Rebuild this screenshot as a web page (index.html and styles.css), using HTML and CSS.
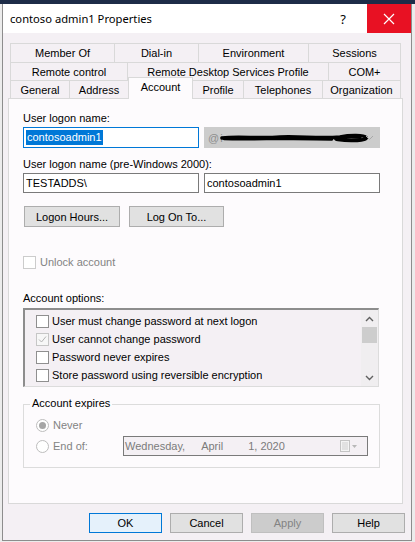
FILE: index.html
```html
<!DOCTYPE html>
<html>
<head>
<meta charset="utf-8">
<link rel="stylesheet" href="styles.css">
</head>
<body>
<div class="desk-strip"></div>
<div class="window">
  <div class="titlebar">
    <span class="title">contoso admin1 Properties</span>
    <span class="tb-help">?</span>
    <span class="tb-close"><svg width="12" height="12" viewBox="0 0 12 12"><path d="M1 1 L11 11 M11 1 L1 11" stroke="#fff" stroke-width="1.2" fill="none"/></svg></span>
  </div>
  <div class="client">
    <div class="tabs">
      <div class="tab-row r1">
        <div class="tab w-member">Member Of</div>
        <div class="tab w-dial">Dial-in</div>
        <div class="tab w-env">Environment</div>
        <div class="tab w-sess">Sessions</div>
      </div>
      <div class="tab-row r2">
        <div class="tab w-rc">Remote control</div>
        <div class="tab w-rds">Remote Desktop Services Profile</div>
        <div class="tab w-com">COM+</div>
      </div>
      <div class="tab-row r3">
        <div class="tab w-gen">General</div>
        <div class="tab w-addr">Address</div>
        <div class="tab sel w-acc">Account</div>
        <div class="tab w-prof">Profile</div>
        <div class="tab w-tel">Telephones</div>
        <div class="tab w-org">Organization</div>
      </div>
    </div>
    <div class="panel">
      <div class="lbl lbl1">User logon name:</div>
      <div class="frow frow1">
        <div class="field focus"><span class="hl">contosoadmin1</span></div>
        <div class="combo">
          <span class="at">@</span><span class="ati">i</span>
          <svg class="scribble" width="150" height="12" viewBox="0 0 150 12"><path d="M2 6 C20 4 40 7 60 5 C80 4 100 7 120 5 C130 3 144 3 146 5.5 C148 8.5 130 9.5 118 7.5 C110 6 125 4 140 5" stroke="#000" stroke-width="3.6" fill="none" stroke-linecap="round"/><path d="M4 7 C30 8 70 6 112 7.5" stroke="#000" stroke-width="2.4" fill="none" stroke-linecap="round"/></svg>
          <svg class="chev" width="9" height="6" viewBox="0 0 9 6"><path d="M1 1 L4.5 4.5 L8 1" stroke="#a8a8a8" stroke-width="1" fill="none"/></svg>
        </div>
      </div>
      <div class="lbl lbl2">User logon name (pre-Windows 2000):</div>
      <div class="frow frow2">
        <div class="field">TESTADDS\</div>
        <div class="field">contosoadmin1</div>
      </div>
      <div class="btnrow">
        <div class="btn b-hours">Logon Hours...</div>
        <div class="btn b-logon">Log On To...</div>
      </div>
      <div class="unlock">
        <span class="cb cb-dis"></span><span class="dis-text">Unlock account</span>
      </div>
      <div class="lbl lbl3">Account options:</div>
      <div class="listbox">
        <div class="items">
          <div class="item"><span class="cb"></span><span>User must change password at next logon</span></div>
          <div class="item"><span class="cb cb-checked"><svg width="11" height="11" viewBox="0 0 11 11"><path d="M2 5.5 L4.5 8 L9 2.5" stroke="#b4b4b4" stroke-width="1" fill="none"/></svg></span><span>User cannot change password</span></div>
          <div class="item"><span class="cb"></span><span>Password never expires</span></div>
          <div class="item"><span class="cb"></span><span>Store password using reversible encryption</span></div>
        </div>
        <div class="scrollbar">
          <div class="sb-arrow"><svg width="9" height="6" viewBox="0 0 9 6"><path d="M1 5 L4.5 1.5 L8 5" stroke="#606060" stroke-width="1.4" fill="none"/></svg></div>
          <div class="sb-thumb"></div>
          <div class="sb-track"></div>
          <div class="sb-arrow"><svg width="9" height="6" viewBox="0 0 9 6"><path d="M1 1 L4.5 4.5 L8 1" stroke="#606060" stroke-width="1.4" fill="none"/></svg></div>
        </div>
      </div>
      <div class="group">
        <span class="legend">Account expires</span>
        <div class="rrow rrow1"><span class="radio on"></span><span class="dis-text">Never</span></div>
        <div class="rrow rrow2">
          <span class="radio"></span><span class="dis-text endof">End of:</span>
          <div class="date">
            <span class="d-day">Wednesday,</span><span class="d-mon">April</span><span class="d-yr">1, 2020</span>
            <svg class="cal" width="18" height="12" viewBox="0 0 18 12"><rect x="0.5" y="0.5" width="9" height="11" fill="#f4f4f4" stroke="#c4c4c4"/><path d="M2 3 H8 M2 5 H8 M2 7 H8 M2 9 H8" stroke="#cfcfcf" stroke-width="1"/><path d="M12 5 L17 5 L14.5 8 Z" fill="#b8b8b8"/></svg>
          </div>
        </div>
      </div>
    </div>
    <div class="footer">
      <div class="fbtn ok">OK</div>
      <div class="fbtn">Cancel</div>
      <div class="fbtn apply">Apply</div>
      <div class="fbtn">Help</div>
    </div>
  </div>
</div>
</body>
</html>
```
FILE: styles.css
```css
* { box-sizing: border-box; }
body {
  margin: 0;
  width: 415px;
  height: 542px;
  overflow: hidden;
  background: #ececec;
  font-family: "Liberation Sans", Arial, sans-serif;
  font-size: 11px;
  color: #000;
}
.desk-strip { height: 4px; background: #1d2c48; }
.window {
  margin-left: 2px;
  width: 410px;
  height: 537px;
  border: 1px solid #8d8d8d;
  border-top: 0;
  background: #f4f0f4;
}
.titlebar { height: 29px; background: #fff; display: flex; align-items: center; }
.title { flex: 1; padding-left: 7px; font-family: "Noto Sans", sans-serif; font-size: 11.2px; }
.tb-help { width: 48px; text-align: center; font-family: "Noto Sans", sans-serif; font-size: 13px; }
.tb-close { width: 44px; height: 29px; background: #e81123; display: flex; align-items: center; justify-content: center; }

.client { padding: 10px 0 0 5px; }
.tabs { margin-left: 2px; width: 391px; }
.tab-row { display: flex; align-items: flex-start; }
.r1 { height: 19px; }
.r2, .r3 { height: 18px; }
.tab {
  height: 100%;
  border-top: 1px solid #d9d9d9;
  border-left: 1px solid #d9d9d9;
  display: flex;
  align-items: center;
  justify-content: center;
  white-space: nowrap;
}
.tab:last-child { border-right: 1px solid #d9d9d9; }
.tab.sel {
  position: relative;
  z-index: 2;
  height: 22px;
  margin-top: -3px;
  background: #fdfbfd;
  border-right: 1px solid #d9d9d9;
  padding-bottom: 3px;
}
.tab.sel + .tab { border-left: 0; }
.w-member { width: 104px; } .w-dial { width: 84px; } .w-env { width: 110px; } .w-sess { width: 93px; }
.w-rc { width: 117px; } .w-rds { width: 201px; } .w-com { width: 73px; }
.w-gen { width: 59px; } .w-addr { width: 59px; } .w-acc { width: 65px; } .w-prof { width: 50px; } .w-tel { width: 79px; } .w-org { width: 79px; }

.panel {
  width: 395px;
  height: 406px;
  border: 1px solid #d9d9d9;
  background: #fdfbfd;
  padding-left: 14px;
  overflow: hidden;
}
.lbl { height: 13px; line-height: 13px; }
.lbl1 { margin-top: 13px; }
.lbl2 { margin-top: 10px; }
.lbl3 { margin-top: 23px; }
.frow { display: flex; gap: 5px; margin-top: 2px; }
.frow1 { height: 21px; }
.frow2 { height: 20px; }
.field {
  width: 176px;
  height: 100%;
  border: 1px solid #7a7a7a;
  background: #fff;
  padding-left: 2px;
  display: flex;
  align-items: center;
}
.field.focus { border-color: #0078d7; }
.hl { background: #0078d7; color: #fff; height: 15px; line-height: 15px; padding: 0 1px; }
.combo {
  position: relative;
  width: 176px;
  height: 100%;
  background: #cccccc;
  display: flex;
  align-items: center;
  padding-left: 4px;
  color: #8e8e8e;
}
.ati { margin-left: 1px; }
.scribble { position: absolute; left: 16px; top: 5px; }
.chev { position: absolute; right: 6px; top: 8px; }

.btnrow { display: flex; gap: 9px; margin-top: 13px; height: 21px; }
.btn {
  height: 21px;
  border: 1px solid #adadad;
  background: #e1e1e1;
  display: flex;
  align-items: center;
  justify-content: center;
}
.b-hours { width: 96px; margin-left: 1px; }
.b-logon { width: 95px; }

.unlock { margin-top: 28px; height: 14px; display: flex; align-items: center; }
.cb {
  width: 13px;
  height: 13px;
  border: 1px solid #8f8f8f;
  background: #fff;
  flex: none;
  display: flex;
  align-items: center;
  justify-content: center;
}
.cb-dis { border-color: #cccccc; }
.cb-checked { border-color: #c6c6c6; background: #f7f7f7; }
.dis-text { color: #838383; margin-left: 4px; }

.listbox {
  margin-top: 3px;
  width: 356px;
  height: 79px;
  border-top: 2px solid #8d8d8d;
  border-left: 2px solid #8d8d8d;
  border-right: 1px solid #dcdcdc;
  border-bottom: 1px solid #dcdcdc;
  background: #f4f0f4;
  display: flex;
}
.items { flex: 1; padding: 2px 0 0 11px; }
.item { height: 18px; display: flex; align-items: center; gap: 3px; }
.scrollbar { width: 17px; display: flex; flex-direction: column; background: #f0eef0; }
.sb-arrow { height: 17px; display: flex; align-items: center; justify-content: center; }
.sb-thumb { height: 16px; margin: 0 1px; background: #cdcdcd; }
.sb-track { flex: 1; }

.group {
  position: relative;
  margin-top: 17px;
  width: 357px;
  height: 64px;
  border: 1px solid #dcdcdc;
  padding: 13px 0 0 12px;
}
.legend {
  position: absolute;
  left: 6px;
  top: -8px;
  padding: 0 2px;
  line-height: 13px;
  background: #fdfbfd;
}
.rrow { display: flex; align-items: center; }
.rrow1 { height: 14px; }
.rrow2 { height: 20px; margin-top: 4px; }
.radio {
  width: 13px;
  height: 13px;
  border-radius: 50%;
  border: 1px solid #bdbdbd;
  background: #fff;
  flex: none;
  display: flex;
  align-items: center;
  justify-content: center;
}
.radio.on::after {
  content: "";
  width: 7px;
  height: 7px;
  border-radius: 50%;
  background: #a6a6a6;
}
.endof { width: 70px; }
.date {
  position: relative;
  width: 245px;
  height: 20px;
  border: 1px solid #7a7a7a;
  background: #f4f0f4;
  color: #7b7b7b;
  display: flex;
  align-items: center;
  padding-left: 1px;
}
.d-mon { margin-left: 16px; }
.d-yr { margin-left: 25px; }
.cal { position: absolute; right: 9px; top: 3px; }

.footer {
  margin-top: 9px;
  display: flex;
  justify-content: flex-end;
  gap: 8px;
  padding-right: 6px;
}
.fbtn {
  width: 73px;
  height: 20px;
  border: 1px solid #adadad;
  background: #e1e1e1;
  display: flex;
  align-items: center;
  justify-content: center;
}
.fbtn.ok { border-color: #0078d7; background: #e5f1fb; }
.fbtn.apply { background: #cccccc; border-color: #bfbfbf; color: #838383; }
```
